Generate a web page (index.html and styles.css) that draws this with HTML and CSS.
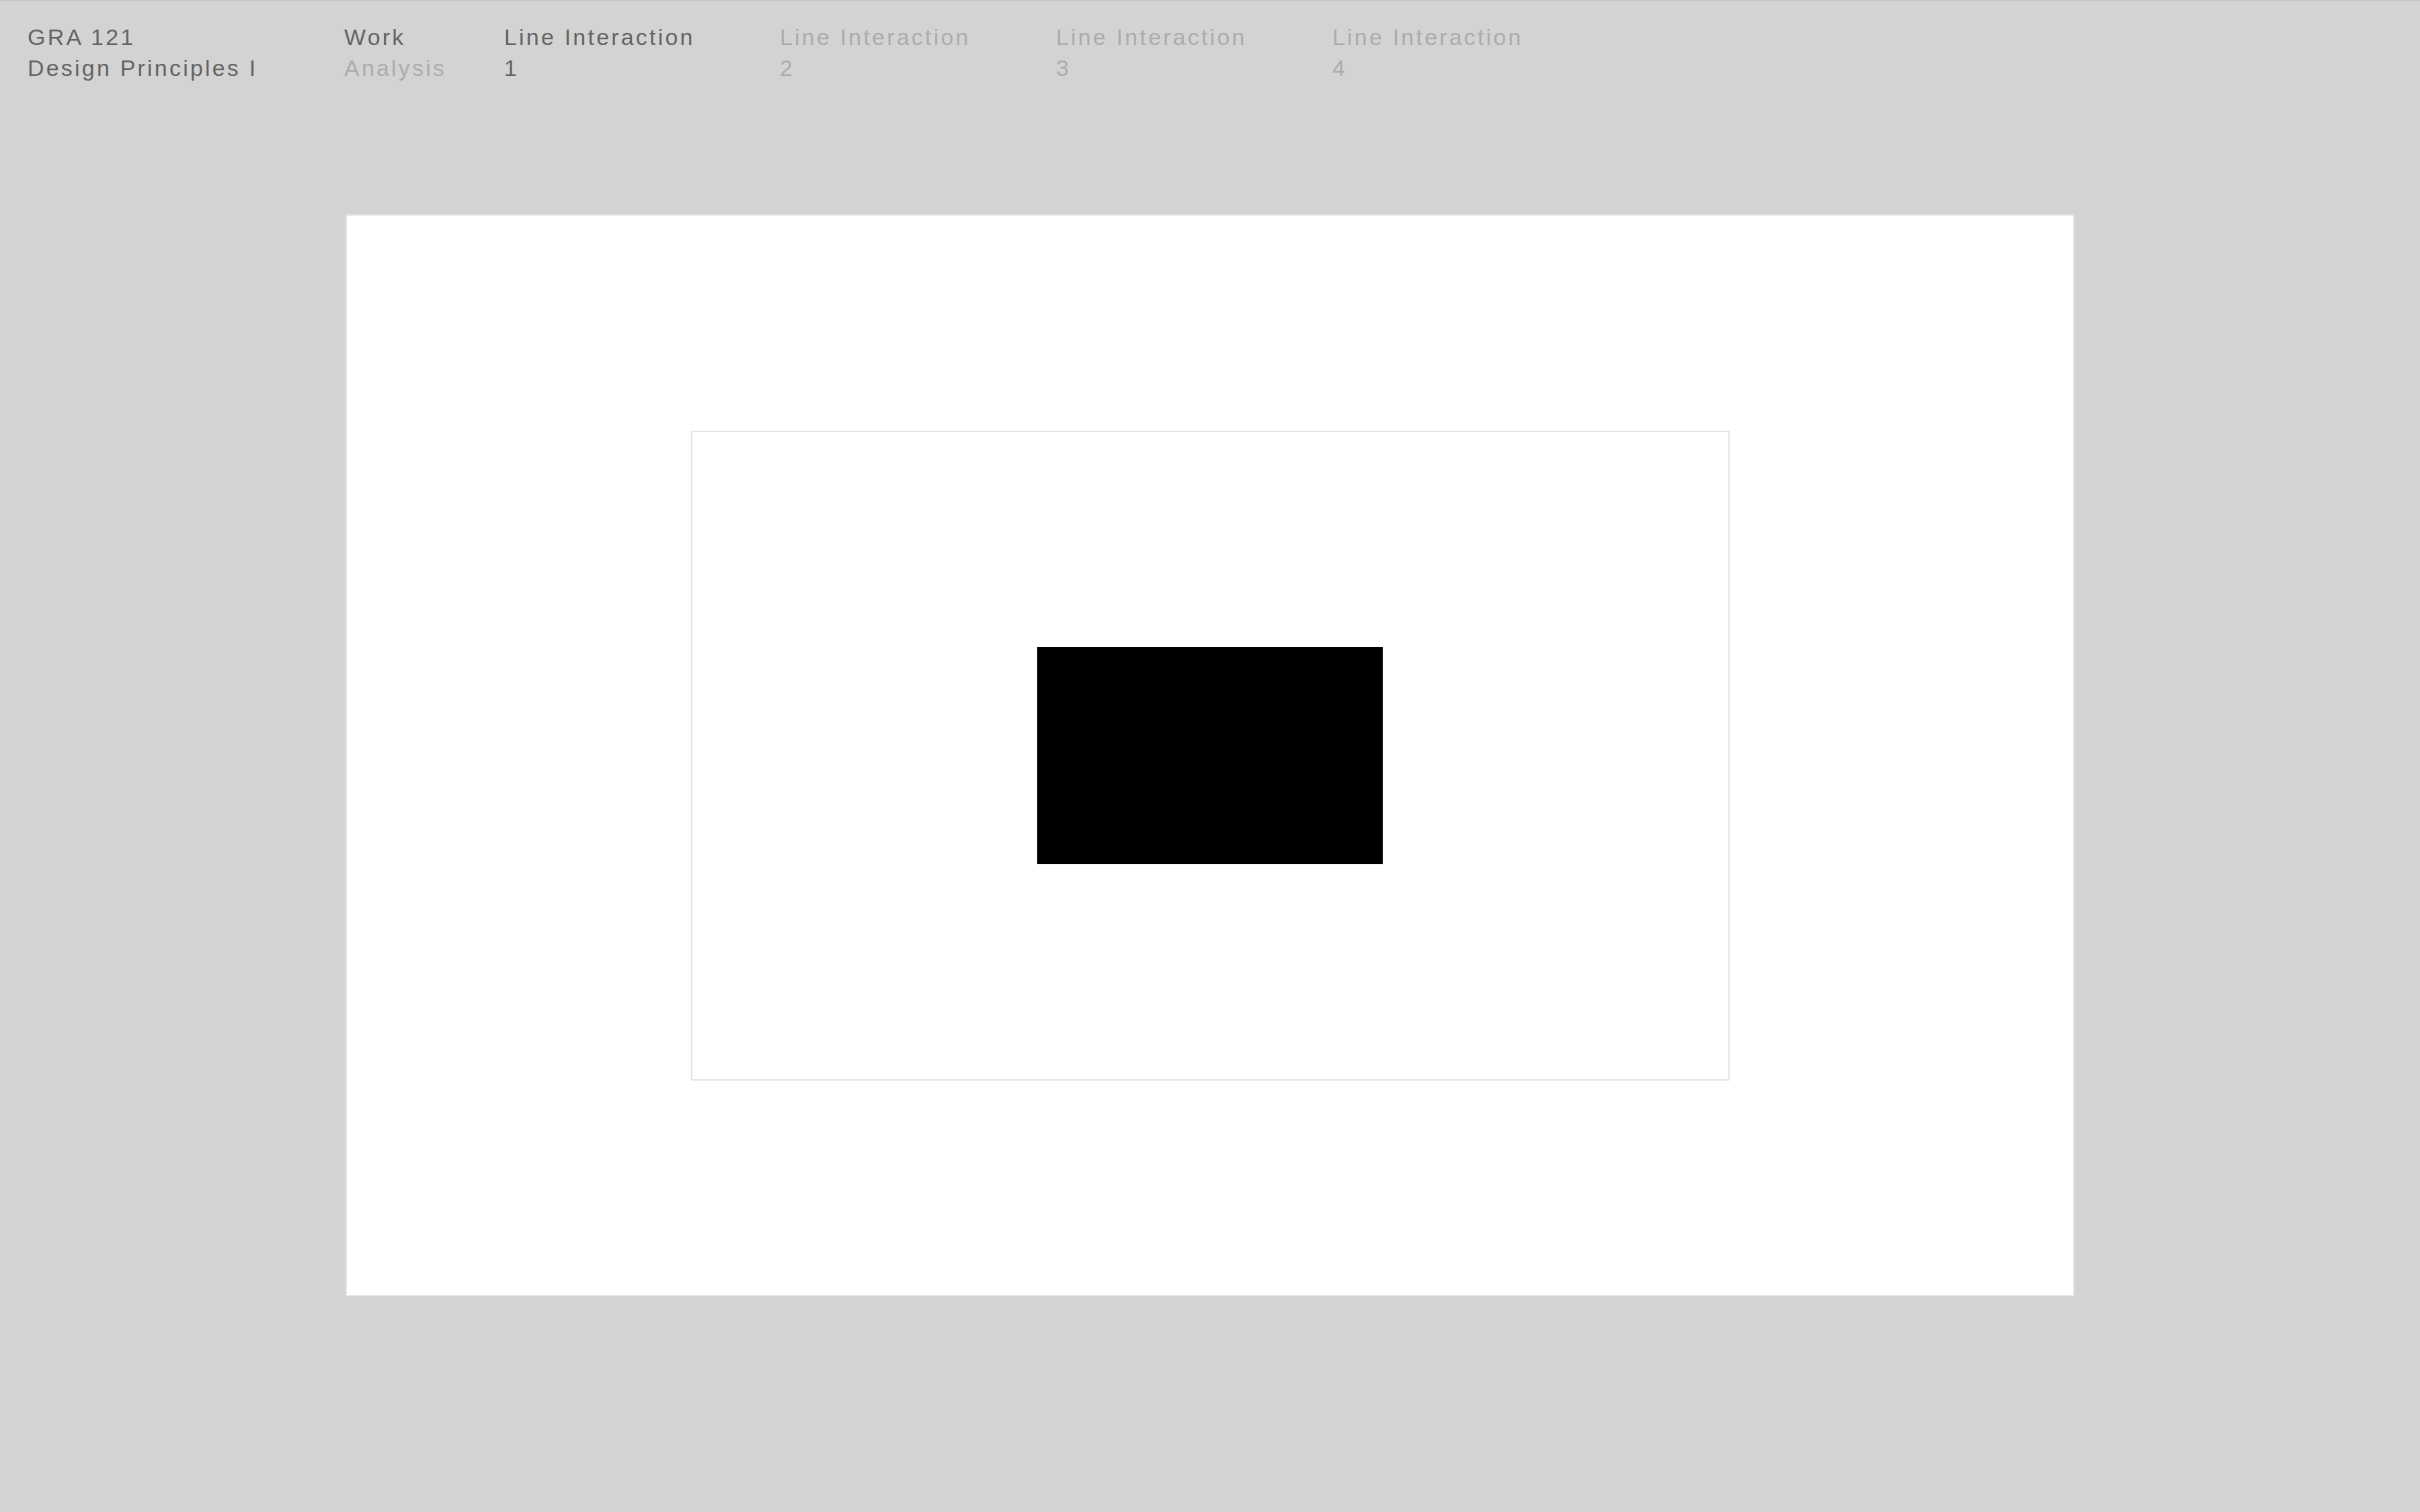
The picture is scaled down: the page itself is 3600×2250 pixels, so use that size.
FILE: index.html
```html
<!DOCTYPE html>
<html lang="en">
<head>
<meta charset="utf-8">
<title>GRA 121 — Line Interaction 1</title>
<link rel="stylesheet" href="styles.css">
</head>
<body>
<header class="nav">
  <div class="nav-item dark"><span>GRA 121</span><span>Design Principles I</span></div>
  <div class="nav-item"><span class="dark">Work</span><span class="light">Analysis</span></div>
  <div class="nav-item dark"><span>Line Interaction</span><span>1</span></div>
  <div class="nav-item light"><span>Line Interaction</span><span>2</span></div>
  <div class="nav-item light"><span>Line Interaction</span><span>3</span></div>
  <div class="nav-item light"><span>Line Interaction</span><span>4</span></div>
</header>
<main class="stage">
  <section class="panel">
    <div class="frame">
      <div class="block"></div>
    </div>
  </section>
</main>
</body>
</html>
```
FILE: styles.css
```css
html, body {
  margin: 0;
  padding: 0;
}
body {
  background: #d3d3d3;
  border-top: 2px solid #c7c7c7;
  height: 2248px;
  overflow: hidden;
  font-family: "Liberation Sans", Arial, Helvetica, sans-serif;
  font-size: 34px;
  line-height: 46px;
  letter-spacing: 3.2px;
}
.nav {
  display: grid;
  grid-template-columns: 471px 238px 410px 411px 411px auto;
  padding: 30px 0 0 41px;
}
.nav-item {
  display: flex;
  flex-direction: column;
  white-space: nowrap;
}
.dark { color: #646464; }
.light { color: #acacac; }
.stage {
  padding-top: 195px;
  display: flex;
  justify-content: center;
}
.panel {
  width: 2572px;
  height: 1610px;
  box-sizing: border-box;
  background: #ffffff;
  border: 2px solid #e6e6e6;
  display: flex;
  align-items: center;
  justify-content: center;
}
.frame {
  width: 1545px;
  height: 967px;
  box-sizing: border-box;
  border: 2px solid #e3e3e3;
  display: flex;
  align-items: center;
  justify-content: center;
}
.block {
  width: 514px;
  height: 323px;
  background: #000000;
}
```
